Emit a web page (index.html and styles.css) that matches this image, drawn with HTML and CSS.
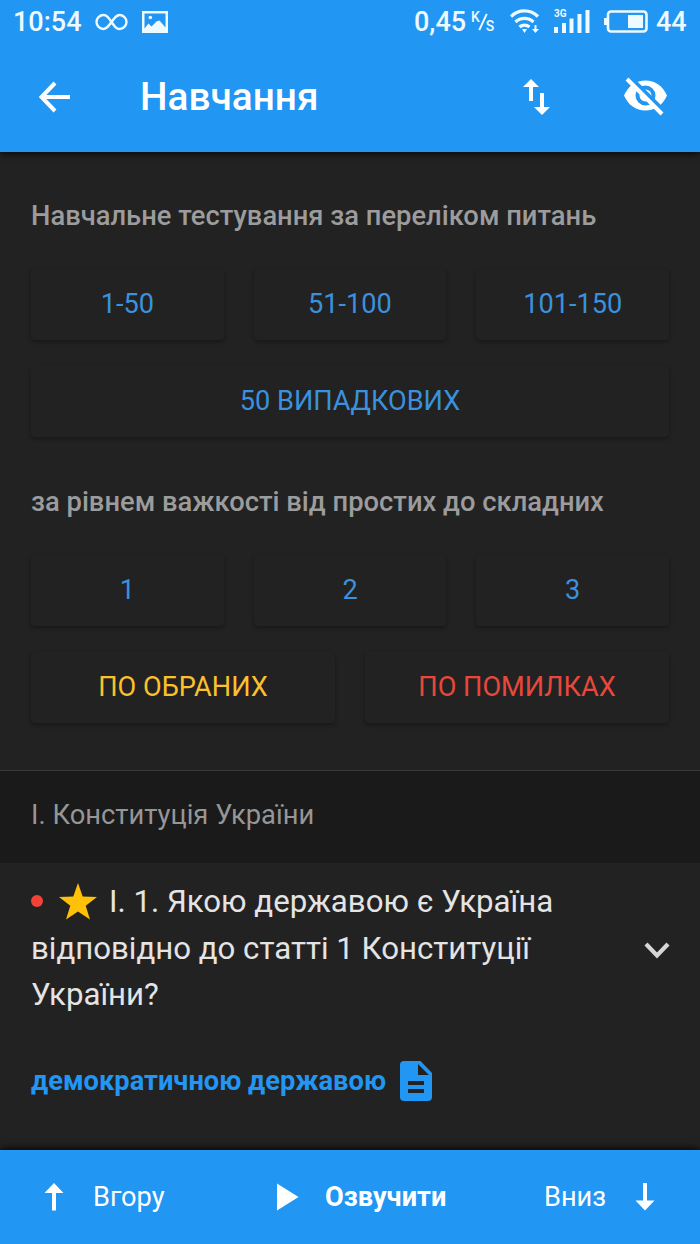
FILE: index.html
```html
<!DOCTYPE html>
<html lang="uk">
<head>
<meta charset="utf-8">
<title>Навчання</title>
<link rel="stylesheet" href="styles.css">
</head>
<body>
<div class="screen">
  <header class="top">
    <div class="status">
      <span class="clock">10:54</span>
      <svg class="infinity" width="33" height="18" viewBox="0 0 33 18"><path d="M16.500 9C13 4 11.500 2 8.500 2a7 7 0 0 0 0 14c3 0 4.800-2.500 8-7s5-7 8-7a7 7 0 0 1 0 14c-3 0-4.500-2-8-7z" fill="none" stroke="currentColor" stroke-width="2.400"/></svg>
      <svg class="photo" width="26" height="22" viewBox="0 0 26 22"><path fill="currentColor" fill-rule="evenodd" d="M0 0h26v22H0zM2.500 2.500v15l4-5 3 3 5-5 3-1 6 7V2.500z"/><circle cx="8.300" cy="6.500" r="1.800" fill="currentColor"/></svg>
      <span class="speed">0,45</span>
      <span class="unit"><span>K</span><i></i><span class="per">S</span></span>
      <svg class="wifi" width="30" height="27" viewBox="0 0 30 27"><g fill="none" stroke="currentColor" stroke-width="3.200"><path d="M1 8.500a19 19 0 0 1 27 0"/><path d="M5.500 14a13 13 0 0 1 18 0"/><path d="M9.500 19a7.500 7.500 0 0 1 10 0"/></g><path fill="currentColor" d="M12 21h5l-2.500 4zM24.500 17h2v4h2.500l-3.500 4-3.500-4h2.500z"/></svg>
      <span class="signal"><span class="net">3G</span>
        <svg width="36" height="23" viewBox="0 0 36 23"><path fill="currentColor" d="M0 17h4v6H0zM8 13h4v10H8zM15.500 8.500h4V23h-4zM23.500 4h4v19h-4zM31.500 0h4v23h-4z"/></svg></span>
      <svg class="battery" width="44" height="23" viewBox="0 0 44 23"><rect x="4" y="1.500" width="38.500" height="20" rx="3" fill="none" stroke="currentColor" stroke-width="2.600"/><path fill="currentColor" d="M0 8h3.500v7H0zM24 5h15v13H24z"/></svg>
      <span class="level">44</span>
    </div>
    <div class="appbar">
      <svg class="back" width="32" height="32" viewBox="0 0 32 32"><path d="M31 16H3M16 2 2.500 16 16 30" fill="none" stroke="currentColor" stroke-width="4"/></svg>
      <h1 class="title">Навчання</h1>
      <svg class="sort" width="28" height="36" viewBox="0 0 28 36"><path fill="currentColor" d="M8 0 0 8h6v14h4V8h6zM17 14h4v14h6l-8 8-8-8h6z"/></svg>
      <svg class="hide" width="44" height="40" viewBox="0 0 44 40"><path fill="currentColor" fill-rule="evenodd" d="M0 18.500C4 9 12 3.500 21.500 3.500S39 9 43 18.500C39 28 31 33.500 21.500 33.500S4 28 0 18.500zM21.500 8.500a10 10 0 1 0 0 20 10 10 0 0 0 0-20z"/><circle cx="21.500" cy="18.500" r="6" fill="currentColor"/><path d="m5-1 36 36" stroke="#2196f3" stroke-width="4"/><path d="m3 2 35 35" stroke="currentColor" stroke-width="4"/></svg>
    </div>
  </header>

  <main class="content">
    <section class="tests">
      <h2 class="heading">Навчальне тестування за переліком питань</h2>
      <div class="row"><button class="btn">1-50</button><button class="btn">51-100</button><button class="btn">101-150</button></div>
      <div class="row"><button class="btn random">50 ВИПАДКОВИХ</button></div>
      <h2 class="heading levels">за рівнем важкості від простих до складних</h2>
      <div class="row"><button class="btn">1</button><button class="btn">2</button><button class="btn">3</button></div>
      <div class="row"><button class="btn chosen">ПО ОБРАНИХ</button><button class="btn errors">ПО ПОМИЛКАХ</button></div>
    </section>
    <div class="chapter">І. Конституція України</div>
    <article class="question">
      <div class="ask">
        <div class="lines">
          <div class="line"><i class="dot"></i><svg class="star" width="38" height="37" viewBox="0 0 38 37"><path fill="#ffc107" d="m19 0 4.700 13.600L38 14 26.700 22.700 31 36.500 19 28.500 7 36.500l4.300-13.800L0 14l14.300-.4z"/></svg><span class="first">І. 1. Якою державою є Україна</span></div>
          <div class="line second">відповідно до статті 1 Конституції</div>
          <div class="line third">України?</div>
        </div>
        <svg class="chevron" width="26" height="17" viewBox="0 0 26 17"><path d="m2 2 11 11.500L24 2" fill="none" stroke="currentColor" stroke-width="4.200"/></svg>
      </div>
      <div class="answer"><span>демократичною державою</span>
        <svg width="32" height="40" viewBox="0 0 32 40"><path fill="currentColor" fill-rule="evenodd" d="M4 0h16.500L32 12v24a4 4 0 0 1-4 4H4a4 4 0 0 1-4-4V4a4 4 0 0 1 4-4zm14 3v11h11zM8 20v4h16v-4zm0 8v4h16v-4z"/></svg>
      </div>
    </article>
  </main>

  <footer class="bottom">
    <svg class="up" width="20" height="28" viewBox="0 0 20 28"><path fill="currentColor" d="M10 0 .5 10H8v17.500h4V10h7.500z"/></svg>
    <span class="label-up">Вгору</span>
    <svg class="play" width="22" height="28" viewBox="0 0 22 28"><path fill="currentColor" d="m0 .5 21.500 13.500L0 27.500z"/></svg>
    <span class="label-play">Озвучити</span>
    <span class="label-down">Вниз</span>
    <svg class="down" width="20" height="28" viewBox="0 0 20 28"><path fill="currentColor" d="M10 27.500.5 17.500H8V0h4v17.500h7.500z"/></svg>
  </footer>
</div>
</body>
</html>
```
FILE: styles.css
```css
* { box-sizing: border-box; }
body { margin: 0; background: #222; font-family: Roboto, "Noto Sans", sans-serif; }
svg { display: block; flex: none; }
.screen { width: 700px; height: 1244px; display: flex; flex-direction: column; overflow: hidden; white-space: nowrap; }

.top { position: relative; height: 152px; background: #2196f3; color: #fff; box-shadow: 0 1px 8px #000; }
.status { height: 43px; display: flex; align-items: center; padding-left: 13px; font-size: 27px; font-weight: 500; color: #edfaff; }
.clock { width: 82px; }
.photo { margin-left: 14px; }
.speed { margin-left: 246px; width: 57px; }
.unit { display: flex; align-items: center; width: 32px; height: 24px; font-size: 14px; line-height: 14px; }
.unit span { margin-top: -9px; }
.unit i { width: 2px; height: 18px; background: currentColor; transform: rotate(25deg); margin: 0 2px; }
.unit .per { margin-top: 9px; }
.wifi { margin-left: 7px; }
.signal { position: relative; margin-left: 14px; }
.net { position: absolute; left: 0; top: -1px; font-size: 10px; line-height: 10px; font-weight: 700; }
.battery { margin-left: 14px; }
.level { margin-left: 8px; }

.appbar { height: 108px; display: flex; align-items: center; padding-left: 39px; }
.title { margin: 0 0 0 69px; width: 383px; font-size: 38.800px; font-weight: 500; line-height: 44px; }
.hide { margin-left: 73px; }

.content { flex: 1; }
.tests { height: 618px; padding: 44px 31px 0; }
.heading { margin: 0 0 33px; height: 40px; font-size: 27.350px; line-height: 40px; font-weight: 500; color: #9c9c9c; }
.levels { margin: 45px 0 33px; }
.row { display: flex; gap: 30px; margin-bottom: 26px; }
.btn { flex: 1; height: 71px; padding: 0 0 2px; border: 0; border-radius: 4px; background: #222; box-shadow: 0 2px 4px rgba(0,0,0,.32); color: #3b91dd; font: 400 27.150px Roboto, sans-serif; }
.chosen { color: #fbc02d; }
.errors { color: #e8483c; }
.chapter { height: 93px; padding: 0 31px 4px; border-top: 1px solid #3a3a3a; background: #1a1a1a; color: #969696; font-size: 27.350px; display: flex; align-items: center; }
.question { padding: 16px 31px 0; }
.ask { display: flex; align-items: center; justify-content: space-between; color: #e4e4e4; }
.line { height: 46.500px; line-height: 46.500px; font-size: 31.200px; display: flex; align-items: center; }
.dot { width: 12px; height: 12px; margin: -3px 16px 0 0; border-radius: 50%; background: #f44336; }
.star { margin: -2px 12px 0 0; }
.chevron { margin: 4px -1px 0 0; color: #d6d6d6; }
.answer { display: flex; align-items: center; gap: 14px; margin-top: 42px; height: 40px; color: #2196f3; font-size: 27.250px; font-weight: 700; }

.bottom { position: relative; height: 94px; background: #2196f3; color: #fff; box-shadow: 0 -1px 8px #000; display: flex; align-items: center; padding-left: 44px; font-size: 27.200px; }
.label-up { margin-left: 29px; width: 184px; }
.label-play { margin-left: 26px; width: 219px; font-weight: 700; }
.label-down { width: 91px; }
```
